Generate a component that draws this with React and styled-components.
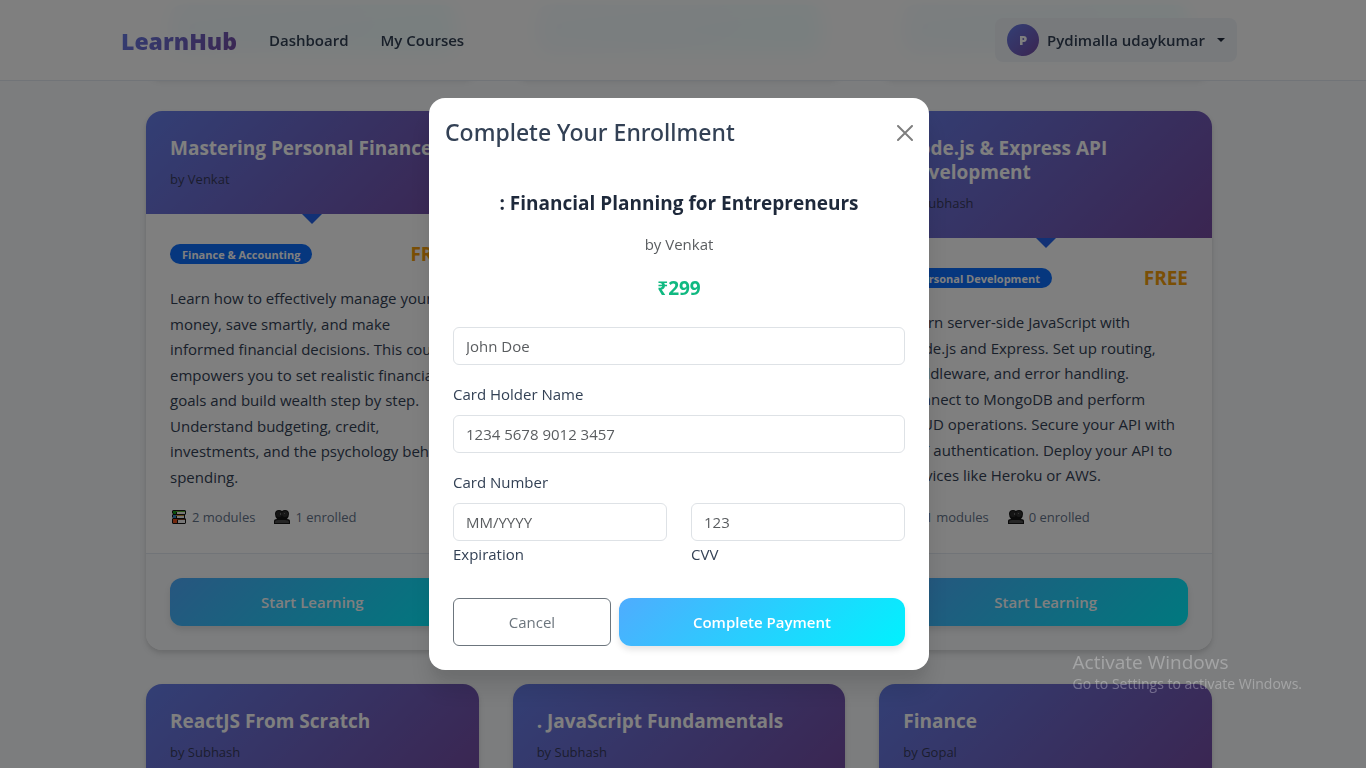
import React from "react";
import styled, { createGlobalStyle, css } from "styled-components";

const brand = "linear-gradient(135deg, #667eea 0%, #764ba2 100%)";
const action = "linear-gradient(135deg, #4facfe 0%, #00f2fe 100%)";

const GlobalStyle = createGlobalStyle`
  *, *::before, *::after { box-sizing: border-box; }
  body {
    margin: 0;
    overflow: hidden;
    background: #f8fafc;
    color: #334155;
    font-family: "Open Sans", "Noto Sans", sans-serif;
    font-size: 15px;
    line-height: 26px;
  }
  h1, h2, h3, p { margin: 0; }
  button, input { font: inherit; }
`;

const Page = styled.div`
  height: 100vh;
  overflow: hidden;
  padding-right: 8px;
`;

const Navbar = styled.header`
  position: fixed;
  inset: 0 0 auto 0;
  z-index: 10;
  padding-right: 8px;
  background: rgba(255, 255, 255, 0.95);
  backdrop-filter: blur(10px);
  border-bottom: 1px solid #e2e8f0;
`;

const NavInner = styled.div`
  max-width: 1140px;
  height: 80px;
  margin: 0 auto;
  padding: 0 12px;
  display: flex;
  align-items: center;
`;

const Logo = styled.a`
  margin-right: 32px;
  padding-top: 2px;
  font-size: 23px;
  line-height: 36px;
  font-weight: 800;
  text-decoration: none;
  color: transparent;
  background: ${brand};
  background-clip: text;
  -webkit-background-clip: text;
`;

const NavLinks = styled.nav`
  display: flex;
  gap: 32px;
  margin-right: auto;
`;

const NavLink = styled.a`
  color: #334155;
  font-weight: 600;
  text-decoration: none;
`;

const UserButton = styled.button`
  display: flex;
  align-items: center;
  gap: 8px;
  height: 44px;
  padding: 0 12px;
  border: 0;
  border-radius: 8px;
  background: #f1f5f9;
  color: #334155;
  font-weight: 600;
`;

const Avatar = styled.span`
  width: 32px;
  height: 32px;
  border-radius: 50%;
  display: grid;
  place-items: center;
  background: ${brand};
  color: #fff;
  font-size: 13px;
  font-weight: 800;
`;

const Caret = styled.span`
  margin-left: 4px;
  border: 4px solid transparent;
  border-top-color: #1e293b;
  border-bottom: 0;
`;

const Courses = styled.main`
  max-width: 1066px;
  margin: -20px auto 0;
  display: grid;
  grid-template-columns: repeat(3, 1fr);
  gap: 34px;
`;

const Card = styled.article`
  display: flex;
  flex-direction: column;
  overflow: hidden;
  border-radius: 16px;
  background: #fff;
  box-shadow: 0 4px 6px rgba(0, 0, 0, 0.1), 0 2px 4px rgba(0, 0, 0, 0.06);
`;

const CardHeader = styled.div`
  position: relative;
  padding: 25px 24px 24px;
  background: ${brand};

  &::after {
    content: "";
    position: absolute;
    top: 100%;
    left: 50%;
    margin-left: -10px;
    border: 10px solid transparent;
    border-top-color: #2563eb;
    border-bottom: 0;
  }
`;

const CardTitle = styled.h2`
  margin-bottom: 8px;
  color: #fff;
  font-size: 19px;
  line-height: 24px;
  font-weight: 700;
  white-space: pre;
`;

const Author = styled.p`
  color: rgba(33, 37, 41, 0.72);
  font-size: 13px;
  line-height: 22px;
`;

const CardBody = styled.div`
  flex: 1;
  display: flex;
  flex-direction: column;
  padding: 24px;
`;

const BadgeRow = styled.div`
  display: flex;
  justify-content: space-between;
  align-items: center;
  height: 32px;
  margin-bottom: 16px;
`;

const Badge = styled.span`
  height: 20px;
  padding: 0 12px;
  border-radius: 10px;
  background: #0d6efd;
  color: #fff;
  font-size: 11px;
  line-height: 21px;
  font-weight: 700;
`;

const Free = styled.strong`
  color: #f59e0b;
  font-size: 19px;
  font-weight: 700;
`;

const Description = styled.p`
  margin-bottom: 15px;
  line-height: 1.7;
  white-space: pre;
`;

const Meta = styled.div`
  display: flex;
  gap: 18px;
  margin-top: auto;
  color: #64748b;
  font-size: 13px;
  line-height: 24px;
`;

const MetaItem = styled.span`
  display: flex;
  align-items: center;
  gap: 4px;
`;

const CardFooter = styled.div`
  padding: 24px;
  background: #f8fafc;
  border-top: 1px solid #e2e8f0;
`;

const filled = css`
  height: 48px;
  border: 0;
  border-radius: 12px;
  background: ${action};
  box-shadow: 0 4px 6px rgba(0, 0, 0, 0.1);
`;

const PrimaryButton = styled.button`
  ${filled}
  width: 100%;
  color: #fff;
  font-weight: 600;
`;

const ButtonBar = styled.div`
  ${filled}
`;

const Overlay = styled.div`
  position: fixed;
  inset: 0;
  z-index: 20;
  display: flex;
  align-items: center;
  justify-content: center;
  padding-right: 8px;
  background: rgba(0, 0, 0, 0.5);
`;

const Dialog = styled.section`
  width: 100%;
  max-width: 500px;
  border-radius: 16px;
  background: #fff;
  box-shadow: 0 20px 25px rgba(0, 0, 0, 0.1), 0 10px 10px rgba(0, 0, 0, 0.04);
`;

const DialogHeader = styled.div`
  display: flex;
  align-items: center;
  justify-content: space-between;
  padding: 16px;
`;

const DialogTitle = styled.h1`
  font-family: "Noto Sans", "Open Sans", sans-serif;
  font-size: 23px;
  line-height: 37px;
  font-weight: 500;
`;

const CloseButton = styled.button`
  display: flex;
  padding: 0;
  border: 0;
  background: none;
  color: #000;
  opacity: 0.5;
`;

const DialogBody = styled.form`
  padding: 24px;
`;

const Summary = styled.div`
  display: flex;
  flex-direction: column;
  gap: 16px;
  margin-bottom: 24px;
  text-align: center;
`;

const CourseName = styled.h2`
  color: #1e293b;
  font-size: 19px;
  line-height: 24px;
  font-weight: 700;
`;

const Teacher = styled.p`
  color: rgba(33, 37, 41, 0.75);
`;

const Price = styled.p`
  color: #10b981;
  font-size: 19px;
  line-height: 30px;
  font-weight: 700;
`;

const Field = styled.div`
  display: flex;
  flex-direction: column;
  gap: ${(p) => (p.$tight ? "0" : "16px")};
  margin-bottom: ${(p) => (p.$tight ? "0" : "8px")};
`;

const FieldPair = styled.div`
  display: grid;
  grid-template-columns: 1fr 1fr;
  gap: 24px;
  margin-bottom: 31px;
`;

const TextInput = styled.input`
  width: 100%;
  height: 38px;
  padding: 0 12px;
  border: 1px solid #dee2e6;
  border-radius: 6px;
  background: #fff;
  color: #212529;
  &::placeholder {
    color: rgba(33, 37, 41, 0.75);
    opacity: 1;
  }
`;

const Actions = styled.div`
  display: grid;
  grid-template-columns: 16fr 29fr;
  gap: 8px;
`;

const CancelButton = styled.button`
  height: 48px;
  border: 1px solid #6c757d;
  border-radius: 6px;
  background: #fff;
  color: #6c757d;
`;

const Watermark = styled.aside`
  position: fixed;
  right: 64px;
  bottom: 74px;
  z-index: 30;
  color: rgba(255, 255, 255, 0.3);
  pointer-events: none;
`;

const WatermarkTitle = styled.p`
  font-size: 19px;
  line-height: 24px;
`;

const WatermarkText = styled.p`
  font-size: 14px;
  line-height: 20px;
`;

const BooksIcon = () => (
  <svg width="18" height="16" viewBox="0 0 18 16" aria-hidden="true">
    <path d="M3 1h12l1 1v3l-1 1v3l1 1v4l-1 1H3l-1-1v-4l1-1-1-1V6l1-1-1-1V2z" fill="#141414" />
    <path d="M4 2h11v1H4z" fill="#5fae2e" />
    <path d="M3 2h3v3H4L3 4z" fill="#17a317" />
    <path d="M7 3h8v2H7z" fill="#f0f0e6" />
    <path d="M5 6h9v1H5z" fill="#c9912e" />
    <path d="M3 6h3v3H3z" fill="#3b8ac4" />
    <path d="M7 7h7v2H7z" fill="#f0f0f0" />
    <path d="M4 10h11v1H4z" fill="#7a3a1c" />
    <path d="M3 10h4v4H3z" fill="#e8501c" />
    <path d="M8 11h7v3H8z" fill="#f0f0f0" />
  </svg>
);

const PeopleIcon = () => (
  <svg width="18" height="16" viewBox="0 0 18 16" aria-hidden="true">
    <path d="M1 15v-3q0-2 3-2Q2 8 2 5q0-4 4-4 2 0 3 1 1-1 3-1 4 0 4 4 0 3-2 5 3 0 3 2v3z" fill="#141414" />
    <path d="M2 14v-1q0-2 3-2h7q4 0 4 2v1z" fill="#4c4c4c" />
    <circle cx="6" cy="5" r="3" fill="#2b2b2b" />
    <circle cx="12" cy="5" r="3" fill="#303030" />
    <path d="M7 4h1v2H7zM11 4h1v1h-1z" fill="#6b6b6b" />
  </svg>
);

const courses = [
  {
    title: "Mastering Personal Finance",
    author: "Venkat",
    category: "Finance & Accounting",
    modules: 2,
    enrolled: 1,
    text: "Learn how to effectively manage your\nmoney, save smartly, and make\ninformed financial decisions. This course\nempowers you to set realistic financial\ngoals and build wealth step by step.\nUnderstand budgeting, credit,\ninvestments, and the psychology behind\nspending.",
  },
  null,
  {
    title: "Node.js & Express API\nDevelopment",
    author: "Subhash",
    category: "Personal Development",
    modules: 1,
    enrolled: 0,
    text: "Learn server-side JavaScript with\nNode.js and Express. Set up routing,\nmiddleware, and error handling.\nConnect to MongoDB and perform\nCRUD operations. Secure your API with\nJWT authentication. Deploy your API to\nservices like Heroku or AWS.",
  },
];

const nextCourses = [
  { title: "ReactJS From Scratch", author: "Subhash" },
  { title: ". JavaScript Fundamentals", author: "Subhash" },
  { title: "Finance", author: "Gopal" },
];

const CourseHeader = ({ title, author }) => (
  <CardHeader>
    <CardTitle>{title}</CardTitle>
    <Author>by {author}</Author>
  </CardHeader>
);

const CourseCard = ({ course }) => (
  <Card>
    <CourseHeader title={course.title} author={course.author} />
    <CardBody>
      <BadgeRow>
        <Badge>{course.category}</Badge>
        <Free>FREE</Free>
      </BadgeRow>
      <Description>{course.text}</Description>
      <Meta>
        <MetaItem><BooksIcon />{course.modules} modules</MetaItem>
        <MetaItem><PeopleIcon />{course.enrolled} enrolled</MetaItem>
      </Meta>
    </CardBody>
    <CardFooter>
      <PrimaryButton type="button">Start Learning</PrimaryButton>
    </CardFooter>
  </Card>
);

const LabeledInput = ({ id, label, placeholder, tight }) => (
  <Field $tight={tight}>
    <TextInput id={id} placeholder={placeholder} />
    <label htmlFor={id}>{label}</label>
  </Field>
);

export default function App() {
  return (
    <>
      <GlobalStyle />
      <Page>
        <Navbar>
          <NavInner>
            <Logo href="#home">LearnHub</Logo>
            <NavLinks>
              <NavLink href="#dashboard">Dashboard</NavLink>
              <NavLink href="#courses">My Courses</NavLink>
            </NavLinks>
            <UserButton type="button">
              <Avatar>P</Avatar>
              Pydimalla udaykumar
              <Caret />
            </UserButton>
          </NavInner>
        </Navbar>
        <Courses>
          {[0, 1, 2].map((n) => (
            <Card key={n} aria-hidden="true">
              <CardFooter><ButtonBar /></CardFooter>
            </Card>
          ))}
          {courses.map((course, n) =>
            course ? <CourseCard key={n} course={course} /> : <Card key={n} aria-hidden="true" />
          )}
          {nextCourses.map((course) => (
            <Card key={course.title}>
              <CourseHeader {...course} />
            </Card>
          ))}
        </Courses>
      </Page>
      <Overlay>
        <Dialog role="dialog" aria-modal="true" aria-labelledby="enroll-title">
          <DialogHeader>
            <DialogTitle id="enroll-title">Complete Your Enrollment</DialogTitle>
            <CloseButton type="button" aria-label="Close">
              <svg width="16" height="16" viewBox="0 0 16 16" stroke="currentColor" strokeWidth="2" strokeLinecap="round">
                <path d="M1 1l14 14M15 1L1 15" />
              </svg>
            </CloseButton>
          </DialogHeader>
          <DialogBody>
            <Summary>
              <CourseName>: Financial Planning for Entrepreneurs</CourseName>
              <Teacher>by Venkat</Teacher>
              <Price>₹299</Price>
            </Summary>
            <LabeledInput id="holder" label="Card Holder Name" placeholder="John Doe" />
            <LabeledInput id="number" label="Card Number" placeholder="1234 5678 9012 3457" />
            <FieldPair>
              <LabeledInput id="expiration" label="Expiration" placeholder="MM/YYYY" tight />
              <LabeledInput id="cvv" label="CVV" placeholder="123" tight />
            </FieldPair>
            <Actions>
              <CancelButton type="button">Cancel</CancelButton>
              <PrimaryButton type="button">Complete Payment</PrimaryButton>
            </Actions>
          </DialogBody>
        </Dialog>
      </Overlay>
      <Watermark>
        <WatermarkTitle>Activate Windows</WatermarkTitle>
        <WatermarkText>Go to Settings to activate Windows.</WatermarkText>
      </Watermark>
    </>
  );
}
